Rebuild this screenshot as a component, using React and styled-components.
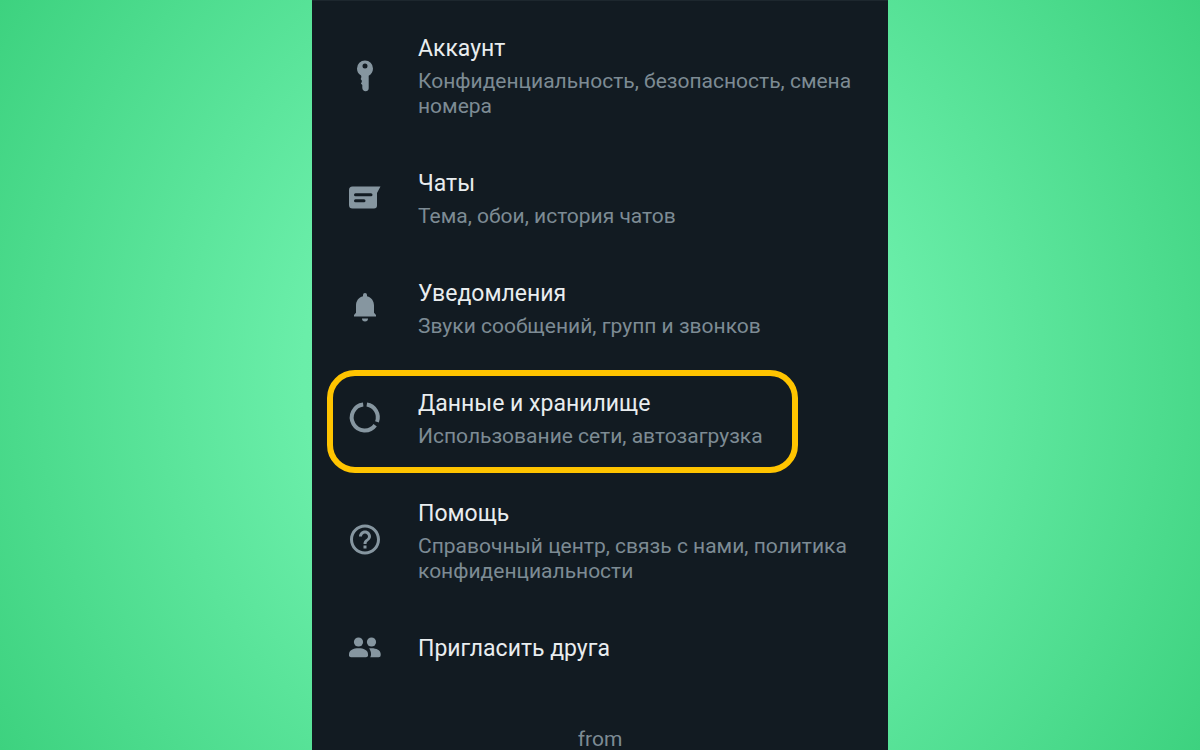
import React, { useState } from 'react';
import styled, { createGlobalStyle } from 'styled-components';

// STYLES
const GlobalStyle = createGlobalStyle`
  * {
    box-sizing: border-box;
  }

  body {
    margin: 0;
    font-family: Roboto, "Noto Sans", sans-serif;
  }
`;

const Page = styled.div`
  height: 100vh;
  overflow: hidden;
  display: flex;
  justify-content: center;
  background: radial-gradient(circle farthest-corner, #74f3b1 0%, #6aeea9 42%, #3dd27f 100%);
`;

const Panel = styled.main`
  width: 48%;
  padding-top: 7px;
  display: flex;
  flex-direction: column;
  background-color: #121b22;
  border-top: 1px solid #1d272e;
`;

const MenuList = styled.ul`
  list-style: none;
  margin: 0;
  padding: 0;
`;

const MenuRow = styled.button`
  position: relative;
  width: 100%;
  display: flex;
  align-items: center;
  gap: 35px;
  padding: 26px 35px 24px;
  border: none;
  background: none;
  font-family: inherit;
  text-align: left;
  cursor: pointer;
`;

const Icon = styled.svg`
  flex: none;
  width: 36px;
  height: 36px;
  margin: -4px 0 -2px;
  color: #8696a0;
`;

const RowText = styled.span`
  display: flex;
  flex-direction: column;
  gap: 5px;
`;

const RowTitle = styled.span`
  font-size: 23px;
  line-height: 30px;
  color: #e9edef;
`;

const RowSubtitle = styled.span`
  font-size: 21px;
  line-height: 25px;
  color: #7d8b94;
`;

const Highlight = styled.span`
  position: absolute;
  top: 7px;
  right: 90px;
  bottom: 0;
  left: 15px;
  border: 6px solid #ffc400;
  border-radius: 28px;
  pointer-events: none;
`;

const Footer = styled.footer`
  padding-top: 40px;
  font-size: 21px;
  line-height: 22px;
  text-align: center;
  color: #7d8b94;
`;

// ICONS
const KeyIcon = () => (
  <Icon viewBox="0 0 36 36" fill="currentColor" aria-hidden="true">
    <path
      fillRule="evenodd"
      d="M18 2.5a8 8 0 0 0-8 8c0 3 1.200 5.200 3.800 6.800.7.600.6 1.700.3 2.600l-.5 1.200 1.200 1.500v1.300l-.9 1.500 1.400 1.500v2.800c0 2 1.500 3.500 3.200 3.500h.2c1.700 0 3-1.300 3-3V17.800c2.700-1.500 4.300-4.200 4.300-7.300a8 8 0 0 0-8-8zm0 3a2.500 2.500 0 1 1 0 5 2.500 2.500 0 0 1 0-5z"
    />
  </Icon>
);

const ChatIcon = () => (
  <Icon viewBox="0 0 36 36" aria-hidden="true">
    <path
      fill="currentColor"
      d="M5.500 6.500H33.500L30 13V25.500a3 3 0 0 1-3 3h-21.500a3.500 3.500 0 0 1-3.500-3.500V10A3.500 3.500 0 0 1 5.500 6.500z"
    />
    <path d="M8.500 14.800h15.500M8.500 20.800h8.500" stroke="#121b22" strokeWidth="3" strokeLinecap="round" />
  </Icon>
);

const BellIcon = () => (
  <Icon viewBox="0 0 36 36" fill="currentColor" aria-hidden="true">
    <path d="M18 3a2 2 0 0 0-2 2v1.200c-4.400 1-7 4.800-7 9.300v7.300l-2 2.200v1.500h22V25l-2-2.200v-7.300c0-4.500-2.600-8.300-7-9.300V5a2 2 0 0 0-2-2z" />
    <path d="M15 28.500h6a3 3 0 0 1-6 0z" />
  </Icon>
);

const DataIcon = () => (
  <Icon viewBox="0 0 36 36" fill="none" stroke="currentColor" strokeWidth="4" aria-hidden="true">
    <path d="M19.800 4.600A13 13 0 0 1 30 21.900" />
    <path d="M16.200 4.600A13 13 0 1 0 28.200 25.200" />
  </Icon>
);

const HelpIcon = () => (
  <Icon viewBox="0 1 24 24" fill="currentColor" aria-hidden="true">
    <path d="M11 18h2v-2h-2v2zm1-16C6.480 2 2 6.480 2 12s4.480 10 10 10 10-4.480 10-10S17.520 2 12 2zm0 18c-4.410 0-8-3.590-8-8s3.590-8 8-8 8 3.590 8 8-3.590 8-8 8zm0-14c-2.210 0-4 1.790-4 4h2c0-1.100.9-2 2-2s2 .9 2 2c0 2-3 1.750-3 5h2c0-2.250 3-2.500 3-5 0-2.210-1.790-4-4-4z" />
  </Icon>
);

const PeopleIcon = () => (
  <Icon viewBox="0 0 36 36" fill="currentColor" aria-hidden="true">
    <circle cx="11.500" cy="12" r="4.600" />
    <circle cx="24.500" cy="12" r="4.600" />
    <path d="M2 24c0-4 4.500-5.800 9.500-5.800s9.500 1.800 9.500 5.800v1.300a2 2 0 0 1-2 2H4a2 2 0 0 1-2-2z" />
    <path d="M22 18.400c6-.8 11.700 1.300 11.700 5.600v1.300a2 2 0 0 1-2 2h-8.500c.5-.8.800-1.500.8-2.500v-1c0-2.200-.8-4-2-5.400z" />
  </Icon>
);

const menuItems = [
  {
    id: 'account',
    title: 'Аккаунт',
    subtitle: 'Конфиденциальность, безопасность, смена номера',
    icon: KeyIcon,
  },
  { id: 'chats', title: 'Чаты', subtitle: 'Тема, обои, история чатов', icon: ChatIcon },
  { id: 'notifications', title: 'Уведомления', subtitle: 'Звуки сообщений, групп и звонков', icon: BellIcon },
  { id: 'storage', title: 'Данные и хранилище', subtitle: 'Использование сети, автозагрузка', icon: DataIcon },
  {
    id: 'help',
    title: 'Помощь',
    subtitle: 'Справочный центр, связь с нами, политика конфиденциальности',
    icon: HelpIcon,
  },
  { id: 'invite', title: 'Пригласить друга', icon: PeopleIcon },
];

const App = () => {
  const [selected, setSelected] = useState('storage');

  return (
    <>
      <GlobalStyle />
      <Page>
        <Panel>
          <MenuList>
            {menuItems.map(({ id, title, subtitle, icon: ItemIcon }) => (
              <li key={id}>
                <MenuRow type="button" onClick={() => setSelected(id)}>
                  <ItemIcon />
                  <RowText>
                    <RowTitle>{title}</RowTitle>
                    {subtitle && <RowSubtitle>{subtitle}</RowSubtitle>}
                  </RowText>
                  {selected === id && <Highlight />}
                </MenuRow>
              </li>
            ))}
          </MenuList>
          <Footer>from</Footer>
        </Panel>
      </Page>
    </>
  );
};

export default App;
